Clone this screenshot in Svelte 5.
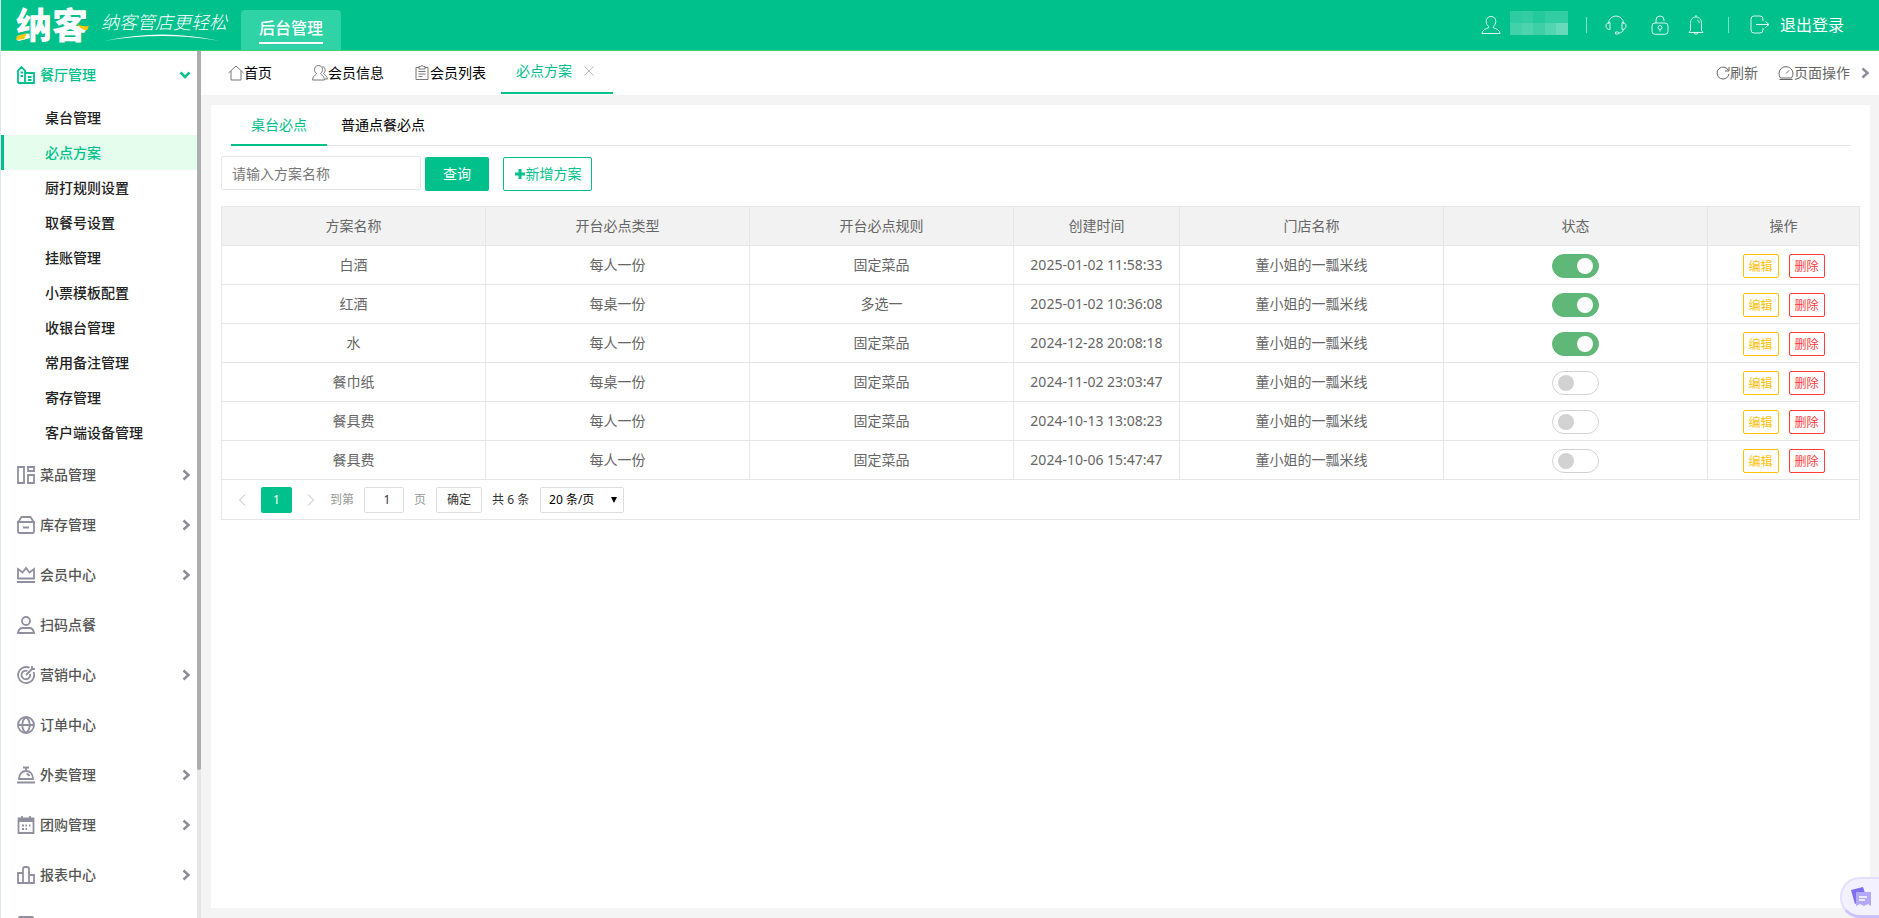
<script lang="ts">
  interface Plan {
    name: string;
    type: string;
    rule: string;
    created: string;
    enabled: boolean;
  }

  const shop = '董小姐的一瓢米线';

  const subMenus = [
    '桌台管理',
    '必点方案',
    '厨打规则设置',
    '取餐号设置',
    '挂账管理',
    '小票模板配置',
    '收银台管理',
    '常用备注管理',
    '寄存管理',
    '客户端设备管理'
  ];

  const menus = [
    { label: '菜品管理', icon: 'dish', more: true },
    { label: '库存管理', icon: 'stock', more: true },
    { label: '会员中心', icon: 'crown', more: true },
    { label: '扫码点餐', icon: 'person', more: false },
    { label: '营销中心', icon: 'target', more: true },
    { label: '订单中心', icon: 'globe', more: false },
    { label: '外卖管理', icon: 'bell', more: true },
    { label: '团购管理', icon: 'calendar', more: true },
    { label: '报表中心', icon: 'chart', more: true },
    { label: '', icon: 'box', more: false }
  ];

  const columns = ['方案名称', '开台必点类型', '开台必点规则', '创建时间', '门店名称', '状态', '操作'];

  let plans: Plan[] = $state([
    { name: '白酒', type: '每人一份', rule: '固定菜品', created: '2025-01-02 11:58:33', enabled: true },
    { name: '红酒', type: '每桌一份', rule: '多选一', created: '2025-01-02 10:36:08', enabled: true },
    { name: '水', type: '每人一份', rule: '固定菜品', created: '2024-12-28 20:08:18', enabled: true },
    { name: '餐巾纸', type: '每桌一份', rule: '固定菜品', created: '2024-11-02 23:03:47', enabled: false },
    { name: '餐具费', type: '每人一份', rule: '固定菜品', created: '2024-10-13 13:08:23', enabled: false },
    { name: '餐具费', type: '每人一份', rule: '固定菜品', created: '2024-10-06 15:47:47', enabled: false }
  ]);

  let activeSub = $state('必点方案');
  let activePane = $state('桌台必点');
  let keyword = $state('');
  let pageNo = $state('1');

  // opacity of the cells that mask the account name
  const mask = [0.18, 0.2, 0.14, 0.2, 0.2, 0.26, 0.3, 0.24, 0.32, 0.4];
</script>

<div class="page">
  <header class="topbar">
    <div class="brand">
      <span class="logo">
        纳客
        <svg class="logo-accent" viewBox="0 0 74 32" width="74" height="32">
          <path d="M1 26 L11 23 L8 29 L0 30 Z" />
          <path d="M61 14 Q66 17 73 16 L71 20 Q65 20 61 14 Z" />
        </svg>
      </span>
      <span class="slogan">
        纳客管店更轻松
        <svg viewBox="0 0 118 8" width="118" height="8">
          <path d="M0 7 Q58 -6 116 7 Q58 -3 0 7 Z" />
        </svg>
      </span>
    </div>
    <a class="module" href="#admin"><span>后台管理</span></a>
    <div class="tools">
      <button class="user" aria-label="账号">
        <svg viewBox="0 0 20 20" width="20" height="20">
          <path d="M10 1.500c3 0 4.800 2 4.800 4.900 0 2.200-1.100 4.200-2.500 5.100v1.300c3 .8 6 2 6.900 5.700H.8c.9-3.700 3.900-4.900 6.900-5.700v-1.300C6.300 10.600 5.200 8.600 5.200 6.400c0-2.900 1.800-4.900 4.800-4.900z" />
        </svg>
        <span class="mask">
          {#each mask as alpha}
            <i style="opacity: {alpha}"></i>
          {/each}
        </span>
      </button>
      <span class="divider"></span>
      <button class="headset" aria-label="客服">
        <svg viewBox="0 0 22 20" width="22" height="20">
          <path d="M3.500 9V8.500a7.500 7.500 0 0 1 15 0V9M5 7.500v7c-2.500 0-4-1.200-4-3.500s1.500-3.500 4-3.500zM17 7.500v7c2.500 0 4-1.200 4-3.500s-1.500-3.500-4-3.500zM18.500 14.500c-.5 2.200-2.300 3.400-4.800 3.600" />
          <path d="M10.500 17h2.300c1.400 0 1.400 2 0 2h-2.300z" />
        </svg>
      </button>
      <button class="lock" aria-label="锁屏">
        <svg viewBox="0 0 18 20" width="18" height="20">
          <rect x="1" y="8" width="16" height="11.300" rx="3" />
          <path d="M5 8V5a4 4 0 0 1 8 0v1" />
          <circle cx="9" cy="12.500" r="2" />
          <path d="M9 14.500v2" />
        </svg>
      </button>
      <button class="notice" aria-label="消息">
        <svg viewBox="0 0 18 20" width="18" height="20">
          <path d="M9 0v2M3.500 16V8.500C3.500 4.500 5.500 2 9 2s5.500 2.500 5.500 6.500V16l1.700 1.500H1.800zM7 18c.5 1.500 3.500 1.500 4 0" />
          <path d="M10.500 5c1 .6 1.600 1.500 1.700 3" />
        </svg>
      </button>
      <span class="divider"></span>
      <button class="logout">
        <svg viewBox="0 0 20 20" width="20" height="20">
          <path d="M13 6V4a3 3 0 0 0-3-3H4a3 3 0 0 0-3 3v11a3 3 0 0 0 3 3h6a3 3 0 0 0 3-3v-2M6 9.500h13M15.500 6.500l3.500 3-3.500 3" />
        </svg>
        退出登录
      </button>
    </div>
  </header>

  <div class="body">
    <aside class="sidebar">
      <nav class="menu">
        <button class="menu-item open">
          <svg class="menu-icon" viewBox="0 0 18 18" width="18" height="18">
            <path d="M1 17V4.500L4.500 1 8 4.500V17M1 17h16V7H8M3.500 6.500H6M3.500 10H6M11 11h3.500M11 14h3.500" />
          </svg>
          <span>餐厅管理</span>
          <svg class="arrow" viewBox="0 0 12 12" width="12" height="12"><path d="M1.500 3.500 6 8l4.500-4.500" /></svg>
        </button>
        {#each subMenus as sub}
          <a
            class="sub-item"
            class:active={sub === activeSub}
            href="#{sub}"
            onclick={() => (activeSub = sub)}
          >{sub}</a>
        {/each}
        {#each menus as menu}
          <button class="menu-item" aria-label={menu.label || '更多'}>
            <svg class="menu-icon" viewBox="0 0 18 18" width="18" height="18">
              {#if menu.icon === 'dish'}
                <path d="M1 1h6v16H1zM11 1h6v4h-6zM11 9h6v8h-6z" />
              {:else if menu.icon === 'stock'}
                <path d="M1 6.500 4.500 1h9L17 6.500M1 6h16v9.500q0 1.500-1.500 1.500h-13Q1 17 1 15.500zM6 11.500h6" />
              {:else if menu.icon === 'crown'}
                <path d="M1 12.500V3l4.500 3.500L9 2l3.500 4.500L17 3v9.500zM0 16h18" />
              {:else if menu.icon === 'person'}
                <circle cx="9" cy="5" r="4" />
                <path d="M1 17c.5-3.500 2.500-5 5-5h6c2.500 0 4.500 1.500 5 5z" />
              {:else if menu.icon === 'target'}
                <path d="M12.500 1.800A8 8 0 1 0 16.500 6M10.500 5A4.300 4.300 0 1 0 13 8M9 9l6-6M15 0v3h3" />
              {:else if menu.icon === 'globe'}
                <circle cx="9" cy="9" r="8" />
                <path d="M1 9h16M9 1c-5 4-5 12 0 16M9 1c5 4 5 12 0 16" />
              {:else if menu.icon === 'bell'}
                <path d="M2 13c0-5 3-8 7-8s7 3 7 8zM0 16.500h18M9 5V1.500M6 1.500h6M9.500 8c1.500 0 2.500 1 3 2" />
              {:else if menu.icon === 'calendar'}
                <path d="M1.500 2.500h15V17h-15zM1.500 5h15M5 0v4M13 0v4M1.500 3.500h15" />
                <path d="M5 9.500h2M8.500 9.500h1.500M12 9.500h1.500M5 13h2M8.500 13h1.500" />
              {:else if menu.icon === 'chart'}
                <path d="M1 7h5v10H1zM6 17V3q0-2 2-2h2q2 0 2 2v14zM12 9h5v8h-5z" />
              {:else}
                <rect x="2" y="1" width="14" height="16" rx="1" />
              {/if}
            </svg>
            <span>{menu.label}</span>
            {#if menu.more}
              <svg class="arrow" viewBox="0 0 12 12" width="12" height="12"><path d="M4.500 1.500 9.500 6l-5 4.500" /></svg>
            {/if}
          </button>
        {/each}
      </nav>
      <div class="scrollbar"><div class="thumb"></div></div>
    </aside>

    <main class="main">
      <div class="tabbar">
        <a class="tab" href="#home">
          <svg viewBox="0 0 16 16" width="16" height="16"><path d="M.5 8 8 1l7.500 7M3 6v9h10V6" /></svg>首页
        </a>
        <a class="tab" href="#member">
          <svg viewBox="0 0 16 16" width="16" height="16"><path d="M6.500.5c2.500 0 4 1.800 4 4 0 1.800-.8 3.200-2 4 0 1.500 3.500 1.500 4 6.500H.5c.5-5 4-5 4-6.500-1.200-.8-2-2.200-2-4 0-2.200 1.500-4 4-4zM10.500 1.500c3 .5 3.500 5 1 7 .5 1.500 3 1.500 4 5.500h-2.500" /></svg>会员信息
        </a>
        <a class="tab" href="#members">
          <svg viewBox="0 0 16 16" width="16" height="16"><path d="M5 2.500H2v12h12v-12h-3M5 1.500h1.500L8 .5l1.500 1H11V4H5zM4.500 6.500h7M4.500 9h7M4.500 11.500h4" /></svg>会员列表
        </a>
        <div class="tab current">
          <a href="#plan">必点方案</a>
          <button class="close" aria-label="关闭">
            <svg viewBox="0 0 12 12" width="12" height="12"><path d="M1.500 1.500l9 9M10.500 1.500l-9 9" /></svg>
          </button>
        </div>
        <div class="page-tools">
          <button>
            <svg viewBox="0 0 14 14" width="14" height="14"><path d="M12.500 4.500A6 6 0 1 0 13 8M13 1v4H9" /></svg>刷新
          </button>
          <button>
            <svg viewBox="0 0 16 16" width="16" height="16"><path d="M2.500 13A7 7 0 1 1 13.500 13zM8 8.500l3-3M1.500 14.500h13" /></svg>页面操作
          </button>
          <button class="next-tabs" aria-label="更多标签">
            <svg class="arrow" viewBox="0 0 12 12" width="12" height="12"><path d="M4.500 1.500 9.500 6l-5 4.500" /></svg>
          </button>
        </div>
      </div>

      <section class="card">
        <div class="pane-tabs">
          {#each ['桌台必点', '普通点餐必点'] as pane}
            <button class:active={pane === activePane} onclick={() => (activePane = pane)}>{pane}</button>
          {/each}
        </div>

        <div class="filters">
          <input type="text" aria-label="方案名称" placeholder="请输入方案名称" bind:value={keyword} />
          <button class="search">查询</button>
          <button class="add">
            <svg viewBox="0 0 12 12" width="12" height="12"><path d="M6 1v10M1 6h10" /></svg>新增方案
          </button>
        </div>

        <div class="grid">
          <table>
            <colgroup>
              <col /><col /><col /><col class="col-time" /><col /><col /><col class="col-action" />
            </colgroup>
            <thead>
              <tr>
                {#each columns as column}
                  <th>{column}</th>
                {/each}
              </tr>
            </thead>
            <tbody>
              {#each plans as plan}
                <tr>
                  <td>{plan.name}</td>
                  <td>{plan.type}</td>
                  <td>{plan.rule}</td>
                  <td>{plan.created}</td>
                  <td>{shop}</td>
                  <td>
                    <input class="switch" type="checkbox" aria-label="{plan.name}状态" bind:checked={plan.enabled} />
                  </td>
                  <td>
                    <div class="actions">
                      <button class="edit">编辑</button>
                      <button class="remove">删除</button>
                    </div>
                  </td>
                </tr>
              {/each}
            </tbody>
          </table>

          <div class="pager">
            <button class="step" aria-label="上一页">
              <svg viewBox="0 0 8 14" width="8" height="14"><path d="M7 1.500 1.500 7 7 12.500" /></svg>
            </button>
            <button class="num">1</button>
            <button class="step" aria-label="下一页">
              <svg viewBox="0 0 8 14" width="8" height="14"><path d="M1 1.500 6.500 7 1 12.500" /></svg>
            </button>
            <label class="jump">到第 <input type="text" bind:value={pageNo} /> 页</label>
            <button class="confirm">确定</button>
            <span class="total">共 6 条</span>
            <span class="size">
              <select aria-label="每页条数">
                <option>20 条/页</option>
                <option>50 条/页</option>
              </select>
            </span>
          </div>
        </div>
      </section>
    </main>
  </div>

  <button class="assistant" aria-label="助手">
    <svg viewBox="0 0 22 22" width="22" height="22">
      <path d="M1 4 13 1l4 12-12 5z" fill="#7d6ff0" />
      <path d="M6 6h15v14l-3-2-4 2-4-2-4 2z" fill="#b3a8fa" />
      <path d="M9 11h8M9 14h6" stroke="#fff" stroke-width="1.500" />
    </svg>
  </button>
</div>

<style>
  :global(body) {
    background: #f4f4f4;
  }

  .page {
    --green: #00c18c;
    --line: #e6e6e6;
    display: flex;
    flex-direction: column;
    box-sizing: border-box;
    height: 100vh;
    border-left: 1px solid #dde4ef;
    overflow: hidden;
    font-family: "Noto Sans", "Noto Sans CJK SC", sans-serif;
    font-size: 14px;
    line-height: 20px;
    color: #666;
  }

  button,
  input,
  select {
    box-sizing: border-box;
    margin: 0;
    padding: 0;
    border: none;
    background: none;
    font: inherit;
    color: inherit;
    outline: none;
  }

  button {
    cursor: pointer;
  }

  a {
    color: inherit;
    text-decoration: none;
  }

  svg {
    fill: none;
    stroke: currentColor;
    flex: none;
  }

  /* top bar */
  .topbar {
    position: relative;
    z-index: 1;
    display: flex;
    flex: none;
    height: 50px;
    background: var(--green);
    box-shadow: 0 1px 0 #43d07a;
    color: #fff;
  }

  .brand {
    display: flex;
    width: 240px;
    white-space: nowrap;
  }

  .logo {
    position: relative;
    width: 74px;
    margin: 10px 0 0 15px;
    font-size: 36px;
    font-weight: 900;
    line-height: 32px;
  }

  .logo-accent {
    position: absolute;
    inset: 0;
    fill: #fdc800;
    stroke: none;
  }

  .slogan {
    display: flex;
    flex-direction: column;
    gap: 2px;
    margin: 12px 0 0 11px;
    font-size: 18px;
    font-style: italic;
    font-weight: 300;
    line-height: 20px;
  }

  .slogan svg {
    margin-left: 3px;
    fill: #fff;
    stroke: none;
  }

  .module {
    display: flex;
    justify-content: center;
    width: 100px;
    margin-top: 10px;
    border-radius: 4px 4px 0 0;
    background: #30d3a6;
    font-size: 16px;
    font-weight: 500;
  }

  .module span {
    height: 32px;
    border-bottom: 2px solid #fff;
    line-height: 36px;
  }

  .tools {
    display: flex;
    align-items: center;
    margin-left: auto;
    padding-right: 35px;
  }

  .tools svg {
    opacity: 0.85;
  }

  .user {
    display: flex;
    align-items: center;
    gap: 9px;
  }

  .mask {
    display: grid;
    grid-template-columns: repeat(5, 1fr);
    grid-template-rows: 12px 12px;
    width: 58px;
    margin-bottom: 4px;
  }

  .mask i {
    background: #fff;
  }

  .divider {
    width: 1px;
    height: 16px;
    margin: 0 18px;
    background: rgba(255, 255, 255, 0.5);
  }

  .headset,
  .lock,
  .notice,
  .logout {
    display: flex;
    align-items: center;
  }

  .lock {
    margin-left: 24px;
  }

  .notice {
    margin: 0 5px 0 18px;
  }

  .logout {
    gap: 10px;
    margin-left: 3px;
    font-size: 16px;
  }

  /* left menu */
  .body {
    display: flex;
    flex: 1;
    min-height: 0;
  }

  .sidebar {
    display: flex;
    width: 200px;
    flex: none;
    overflow: hidden;
    background: #fff;
  }

  .menu {
    display: flex;
    flex-direction: column;
    flex: 1;
  }

  .menu-item {
    display: flex;
    align-items: center;
    flex: none;
    gap: 5px;
    height: 50px;
    padding: 0 6px 0 16px;
    color: #555;
    font-weight: 500;
  }

  .menu-item.open {
    color: var(--green);
  }

  .menu-icon {
    color: #8f8f9f;
    stroke-width: 1.800;
  }

  .open .menu-icon {
    color: inherit;
  }

  .arrow {
    margin-left: auto;
    color: #8d8d9b;
    stroke-width: 2.500;
  }

  .open .arrow {
    color: inherit;
  }

  .sub-item {
    flex: none;
    height: 35px;
    padding-left: 41px;
    border-left: 3px solid transparent;
    color: #222;
    font-weight: 500;
    line-height: 35px;
  }

  .sub-item.active {
    border-color: var(--green);
    background: #e5fdec;
    color: var(--green);
  }

  .scrollbar {
    width: 4px;
    background: #e6e6e6;
  }

  .thumb {
    height: 83%;
    border-radius: 0 0 2px 2px;
    background: #adadad;
  }

  /* opened pages */
  .main {
    display: flex;
    flex-direction: column;
    flex: 1;
    min-width: 0;
  }

  .tabbar {
    display: flex;
    align-items: center;
    flex: none;
    height: 45px;
    padding-left: 27px;
    background: #fff;
  }

  .tab {
    display: flex;
    align-items: center;
    margin-right: 40px;
    color: #000;
  }

  .tab + .tab {
    margin-right: 30px;
  }

  .tab svg,
  .page-tools svg {
    stroke-width: 1;
  }

  .tab > svg {
    color: #777;
  }

  .tabbar .current {
    align-self: stretch;
    gap: 11px;
    margin: 0 0 1px -15px;
    padding: 0 18px 0 15px;
    border-bottom: 2px solid var(--green);
    color: var(--green);
  }

  .close {
    display: flex;
    color: #bbb;
  }

  .page-tools {
    display: flex;
    align-items: center;
    gap: 20px;
    margin-left: auto;
    padding-right: 9px;
  }

  .page-tools button {
    display: flex;
    align-items: center;
  }

  .page-tools .next-tabs {
    margin-left: -12px;
  }

  .next-tabs svg {
    stroke-width: 2.500;
  }

  /* content */
  .card {
    flex: 1;
    margin: 10px 9px 10px 10px;
    padding: 0 10px;
    background: #fff;
  }

  .pane-tabs {
    display: flex;
    height: 40px;
    margin: 0 9px 0 10px;
    border-bottom: 1px solid var(--line);
  }

  .pane-tabs button {
    height: 41px;
    padding: 0 14px 2px;
    color: #000;
  }

  .pane-tabs button.active {
    padding: 0 20px 2px;
    box-shadow: inset 0 -2px 0 var(--green);
    color: var(--green);
  }

  .filters {
    display: flex;
    align-items: flex-start;
    margin: 10px 0 15px;
  }

  .filters input {
    width: 200px;
    height: 34px;
    padding-left: 10px;
    border: 1px solid var(--line);
    border-radius: 2px;
  }

  .filters input::placeholder {
    color: #777;
  }

  .filters button {
    height: 34px;
    margin-top: 1px;
    border-radius: 2px;
  }

  .search {
    width: 64px;
    margin-left: 4px;
    background: var(--green);
    color: #fff;
  }

  .add {
    display: flex;
    align-items: center;
    justify-content: center;
    width: 89px;
    margin-left: 14px;
    border: 1px solid var(--green);
    color: var(--green);
  }

  .add svg {
    stroke-width: 3;
  }

  table {
    width: 100%;
    border-collapse: collapse;
    table-layout: fixed;
  }

  .col-time {
    width: 166px;
  }

  .col-action {
    width: 152px;
  }

  th,
  td {
    height: 38px;
    padding: 0;
    border: 1px solid var(--line);
    font-weight: 400;
    text-align: center;
  }

  th {
    background: #f2f2f2;
  }

  .switch {
    display: block;
    width: 47px;
    height: 24px;
    margin: 2px auto 0;
    padding: 3px 5px;
    border: 1px solid #d2d2d2;
    border-radius: 12px;
    appearance: none;
    cursor: pointer;
  }

  .switch::before {
    content: '';
    display: block;
    width: 16px;
    height: 16px;
    border-radius: 8px;
    background: #d2d2d2;
  }

  .switch:checked {
    border-color: #5fb878;
    background: #5fb878;
  }

  .switch:checked::before {
    margin-left: auto;
    background: #fff;
  }

  .actions {
    display: flex;
    justify-content: center;
    gap: 10px;
    padding-top: 2px;
  }

  .actions button {
    width: 36px;
    height: 24px;
    padding-top: 2px;
    border: 1px solid;
    border-radius: 2px;
    font-size: 12px;
    line-height: 18px;
  }

  .actions .edit {
    color: #ffc107;
  }

  .actions .remove {
    color: #ff3b3b;
  }

  .pager {
    display: flex;
    align-items: center;
    height: 39px;
    padding-left: 16px;
    border: 1px solid var(--line);
    border-top: none;
    font-size: 12px;
  }

  .pager button,
  .pager input,
  .pager select {
    height: 26px;
    border-radius: 2px;
  }

  .step {
    display: flex;
    align-items: center;
    color: #bbb;
  }

  .num {
    width: 31px;
    margin: 0 15px;
    background: var(--green);
    color: #fff;
  }

  .jump {
    display: flex;
    align-items: center;
    gap: 10px;
    margin-left: 15px;
    color: #999;
  }

  .jump input {
    width: 40px;
    padding-left: 6px;
    border: 1px solid #ddd;
    color: #333;
    text-align: center;
  }

  .confirm {
    width: 46px;
    margin: 0 10px;
    border: 1px solid #ddd;
    color: #333;
  }

  .total {
    width: 38px;
    color: #333;
    white-space: nowrap;
  }

  .size {
    position: relative;
    margin-left: 10px;
  }

  .size select {
    display: block;
    width: 84px;
    padding-left: 8px;
    border: 1px solid #ddd;
    color: #000;
    appearance: none;
  }

  .size::after {
    content: '';
    position: absolute;
    top: 10px;
    right: 7px;
    border: 3px solid transparent;
    border-top: 6px solid #000;
    border-bottom: none;
    pointer-events: none;
  }

  .assistant {
    position: fixed;
    right: 0;
    bottom: 0;
    display: flex;
    align-items: center;
    width: 39px;
    height: 41px;
    padding-left: 8px;
    border: 2px solid #e4dffd;
    border-right: none;
    border-bottom: 3px solid #cdc3fb;
    border-radius: 20px 0 0 20px;
    background: #f3f1ff;
  }

  .assistant svg {
    stroke: none;
  }
</style>
